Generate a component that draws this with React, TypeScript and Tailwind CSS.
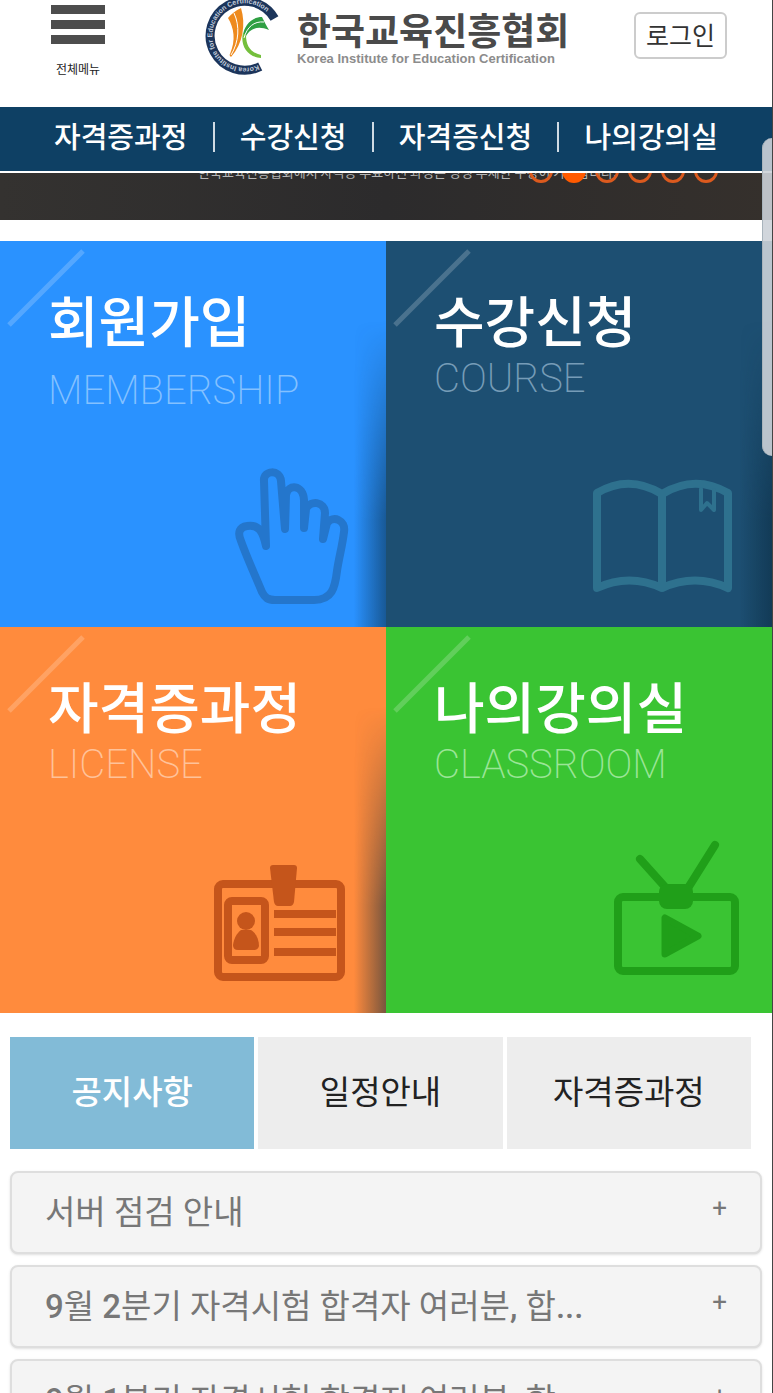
import React from "react";

const menus = ["자격증과정", "수강신청", "자격증신청", "나의강의실"];

const tabs = ["공지사항", "일정안내", "자격증과정"];

const notices = [
  "서버 점검 안내",
  "9월 2분기 자격시험 합격자 여러분, 합...",
  "9월 1분기 자격시험 합격자 여러분, 합..."
];

function Logo() {
  return (
    <svg width="80" height="78" viewBox="203 0 80 78" aria-hidden="true">
      <path
        d="M260.2 66.5A34.5 34.5 0 1 1 274.5 18.5"
        fill="none"
        stroke="#1c355b"
        strokeWidth="9"
      />
      <path id="logo-ring" d="M259 64.5A32.3 32.3 0 1 1 273 20" fill="none" />
      <text
        fill="#c3cddc"
        fontSize="7"
        fontWeight="700"
        fontFamily="Liberation Sans, sans-serif"
      >
        <textPath href="#logo-ring" startOffset="1">
          Korea Institute for Education Certification
        </textPath>
      </text>
      <path d="M228 18C231 14 235 11 241 8C246 24 243 44 231 57C230 56 229 55 230 54C236 40 234 28 228 18Z" fill="#ee8a1d" />
      <path d="M234 13C240 26 239 42 231 55" fill="none" stroke="#fff" strokeWidth="1" />
      <path d="M243 36C244 25 252 17 262 17C264 21 266 25 269 30C257 25 249 29 245 38Z" fill="#2fa043" />
      <path d="M243 33C240 45 247 57 261 58V55C251 53 246 46 246 35Z" fill="#74bf3c" />
      <path d="M244 38C247 27 254 21 264 22" fill="none" stroke="#fff" strokeWidth="1" />
    </svg>
  );
}

function HandIcon() {
  return (
    <path d="M266 305L264 240C263 229 280 228 281 240L285 288L286 254C288 243 303 243 304 259V287L306 268C310 259 325 260 325 272L323 298L327 282C333 274 346 279 344 291C342 307 339 316 337 330C335 347 332 359 314 359H275C268 359 265 357 262 351C255 334 247 317 241 300C237 291 240 286 247 285C259 283 263 291 266 305Z" />
  );
}

function BookIcon() {
  return (
    <>
      <path d="M211 252V347Q243 332 276 347Q309 332 342 347V252Q309 233 276 253Q243 233 211 252ZM276 253V347" />
      <path d="M315 248V269L321 262L328 269V249" strokeWidth="4" />
    </>
  );
}

function LicenseIcon() {
  return (
    <>
      <rect x="218" y="257" width="123" height="93" rx="5" />
      <rect x="228" y="274" width="37" height="59" rx="4" />
      <path d="M278 287H332M278 305H332M278 325H332" strokeLinecap="square" />
      <g fill="currentColor" stroke="none">
        <path d="M273 238H294Q297 238 297 241L294 275Q293 279 290 279H278Q275 279 274 275L270 241Q270 238 273 238Z" />
        <circle cx="246" cy="294" r="9" />
        <path d="M241 303H251C256 306 259 312 259 319Q258 323 254 323H238Q233 323 233 318C234 311 237 306 241 303Z" />
      </g>
    </>
  );
}

function TvIcon() {
  return (
    <>
      <rect x="232" y="270" width="117" height="74" rx="5" />
      <path d="M254 232L280 261M329 218L302 261" />
      <rect x="273" y="257" width="34" height="25" rx="8" fill="currentColor" stroke="none" />
      <path d="M279 291V327L312 309Z" fill="currentColor" strokeWidth="7" />
    </>
  );
}

const tiles = [
  {
    title: "회원가입",
    caption: "MEMBERSHIP",
    tileClass: "bg-[#2a92ff]",
    captionClass: "mt-6 text-[#84c1ff]",
    iconClass: "text-[#2476cc]",
    shadow: true,
    icon: <HandIcon />
  },
  {
    title: "수강신청",
    caption: "COURSE",
    tileClass: "bg-[#1d4f72]",
    captionClass: "mt-3 text-[#769cb7]",
    iconClass: "text-[#2e718e]",
    shadow: true,
    icon: <BookIcon />
  },
  {
    title: "자격증과정",
    caption: "LICENSE",
    tileClass: "bg-[#ff8b3d]",
    captionClass: "mt-3 text-[#ffc29a]",
    iconClass: "text-[#c5551b]",
    shadow: true,
    icon: <LicenseIcon />
  },
  {
    title: "나의강의실",
    caption: "CLASSROOM",
    tileClass: "bg-[#3ac433]",
    captionClass: "mt-3 text-[#9be597]",
    iconClass: "text-[#209f19]",
    shadow: false,
    icon: <TvIcon />
  }
];

function Header() {
  return (
    <header className="flex h-[107px] shrink-0 items-start pr-[45px] pl-[51px]">
      <button type="button" className="flex flex-col items-center pt-[5px]">
        <span className="flex flex-col gap-[6px]">
          <span className="h-[9px] w-[54px] bg-[#4d4d4d]" />
          <span className="h-[9px] w-[54px] bg-[#4d4d4d]" />
          <span className="h-[9px] w-[54px] bg-[#4d4d4d]" />
        </span>
        <span className="mt-4 text-[12px] leading-[18px] text-[#222]">전체메뉴</span>
      </button>
      <a href="#" className="ml-[98px] flex">
        <Logo />
        <span className="ml-[14px] flex flex-col pt-2">
          <span className="text-[37px] leading-[42px] font-bold text-[#4a4a4a]">
            한국교육진흥협회
          </span>
          <span className="font-['Liberation_Sans',sans-serif] text-[13px] leading-[18px] font-bold text-[#8c8c8c]">
            Korea Institute for Education Certification
          </span>
        </span>
      </a>
      <button
        type="button"
        className="mt-3 ml-auto h-[47px] rounded-md border-2 border-[#ccc] px-[10px] pb-1 text-[25px] leading-[38px] text-[#333]"
      >
        로그인
      </button>
    </header>
  );
}

function Banner() {
  const [active, setActive] = React.useState(1);

  return (
    <section className="relative mt-[2px] h-[47px] shrink-0 overflow-hidden bg-linear-to-r from-[#343230] via-[#2c2b2c] to-[#35302c]">
      <p className="absolute -top-[11px] left-[198px] text-[13px] leading-[20px] whitespace-nowrap text-[#b5b5b5]">
        한국교육진흥협회에서 자격증 무료하신 과정은 평생 무제한 수강이 가능합니다.
      </p>
      <div className="absolute -top-[14px] right-[54px] flex items-center gap-[9px]">
        {[0, 1, 2, 3, 4, 5].map((index) => (
          <button
            key={index}
            type="button"
            aria-label={`${index + 1}`}
            onClick={() => setActive(index)}
            className={
              index === active
                ? "size-[24px] rounded-full border-[3px] border-[#ff5a00] bg-[#ff5a00]"
                : "size-[24px] rounded-full border-[3px] border-[#dc5a1e]"
            }
          />
        ))}
      </div>
    </section>
  );
}

// Digits and punctuation are set a step heavier than the Hangul around them.
function NoticeTitle({ text }: { text: string }) {
  return (
    <span>
      {text.split(/([0-9.,]+)/).map((part, index) =>
        index % 2 === 1 ? (
          <span key={index} className="font-medium">
            {part}
          </span>
        ) : (
          part
        )
      )}
    </span>
  );
}

export default function App() {
  const [tab, setTab] = React.useState(0);

  return (
    <div className="relative flex h-screen flex-col overflow-hidden border-r border-[#444] bg-white font-['Noto_Sans_CJK_KR',sans-serif]">
      <Header />

      <nav className="flex h-16 shrink-0 items-center justify-between bg-[#0e4064] px-[54px] pb-2">
        {menus.map((menu, index) => (
          <React.Fragment key={menu}>
            {index > 0 ? <span className="mt-1 h-[30px] w-[2px] bg-[#cfdbe4]" /> : null}
            <a href="#" className="text-[29px] leading-[40px] font-medium text-white">
              {menu}
            </a>
          </React.Fragment>
        ))}
      </nav>

      <Banner />

      <main className="mt-[21px]">
        <div className="grid grid-cols-2">
          {tiles.map((tile) => (
            <a
              key={tile.title}
              href="#"
              className={`relative flex aspect-square flex-col overflow-hidden pt-12 pl-12 ${tile.tileClass}`}
            >
              <svg
                className="absolute top-0 left-0 text-white/20"
                width="92"
                height="92"
                aria-hidden="true"
              >
                <path d="M9 84L83 10" stroke="currentColor" strokeWidth="5" />
              </svg>
              {tile.shadow ? (
                <span className="absolute top-[80px] right-0 bottom-0 w-[32px] bg-linear-to-r from-transparent to-[#0a2a40]/55 mask-[linear-gradient(to_bottom,transparent,black_65%)]" />
              ) : null}
              <strong className="relative text-[55px] leading-[58px] font-medium text-white">
                {tile.title}
              </strong>
              <span
                className={`font-[Roboto,sans-serif] text-[40px] leading-[40px] font-extralight ${tile.captionClass}`}
              >
                {tile.caption}
              </span>
              <svg
                className={`absolute right-[26px] bottom-4 ${tile.iconClass}`}
                width="160"
                height="160"
                viewBox="200 210 160 160"
                fill="none"
                stroke="currentColor"
                strokeWidth="8"
                strokeLinecap="round"
                strokeLinejoin="round"
                aria-hidden="true"
              >
                {tile.icon}
              </svg>
            </a>
          ))}
        </div>

        <div className="mt-6 flex gap-1 pr-[21px] pl-[10px]">
          {tabs.map((name, index) => (
            <button
              key={name}
              type="button"
              onClick={() => setTab(index)}
              className={
                index === tab
                  ? "h-28 flex-1 bg-[#82bbd7] pb-1 text-[33px] font-medium text-white"
                  : "h-28 flex-1 bg-[#ededed] pb-1 text-[33px] text-[#222]"
              }
            >
              {name}
            </button>
          ))}
        </div>

        <ul className="mt-[22px] flex flex-col gap-[11px] px-[10px]">
          {notices.map((notice) => (
            <li key={notice}>
              <button
                type="button"
                className="flex h-[83px] w-full items-center justify-between rounded-lg border-2 border-[#dedede] bg-[#f4f4f4] pr-[33px] pl-[33px] font-[Roboto,'Noto_Sans_CJK_KR',sans-serif] text-[33px] text-[#777] shadow-sm"
              >
                <NoticeTitle text={notice} />
                <span className="pb-2 text-[26px]">+</span>
              </button>
            </li>
          ))}
        </ul>
      </main>

      <div className="absolute top-[138px] right-0 h-[318px] w-[10px] rounded-l-xl border-l border-[#a9b4bc] bg-[#ccd2d8]/90" />
    </div>
  );
}
